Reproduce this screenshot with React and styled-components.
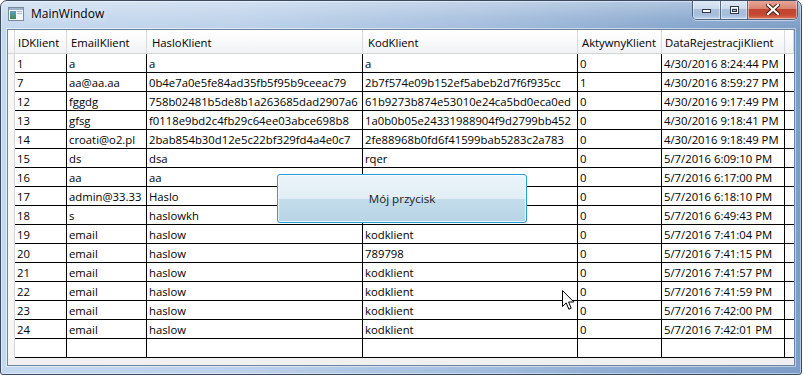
import React from 'react';
import styled, { createGlobalStyle } from 'styled-components';

const GlobalStyle = createGlobalStyle`
  html, body {
    margin: 0;
    padding: 0;
    background: #ffffff;
  }
  body {
    font-family: "Open Sans", "Noto Sans", sans-serif;
    font-size: 11.3px;
    color: #000;
  }
`;

const columns = [
  { key: 'id', title: 'IDKlient', width: 52 },
  { key: 'email', title: 'EmailKlient', width: 80 },
  { key: 'haslo', title: 'HasloKlient', width: 216 },
  { key: 'kod', title: 'KodKlient', width: 215 },
  { key: 'aktywny', title: 'AktywnyKlient', width: 84 },
  { key: 'data', title: 'DataRejestracjiKlient', width: 123 },
];

// KodKlient of rows 16-18 sits under the button, so it is left blank
const rows = [
  ['1', 'a', 'a', 'a', '0', '4/30/2016 8:24:44 PM'],
  ['7', 'aa@aa.aa', '0b4e7a0e5fe84ad35fb5f95b9ceeac79', '2b7f574e09b152ef5abeb2d7f6f935cc', '1', '4/30/2016 8:59:27 PM'],
  ['12', 'fggdg', '758b02481b5de8b1a263685dad2907a6', '61b9273b874e53010e24ca5bd0eca0ed', '0', '4/30/2016 9:17:49 PM'],
  ['13', 'gfsg', 'f0118e9bd2c4fb29c64ee03abce698b8', '1a0b0b05e24331988904f9d2799bb452', '0', '4/30/2016 9:18:41 PM'],
  ['14', 'croati@o2.pl', '2bab854b30d12e5c22bf329fd4a4e0c7', '2fe88968b0fd6f41599bab5283c2a783', '0', '4/30/2016 9:18:49 PM'],
  ['15', 'ds', 'dsa', 'rqer', '0', '5/7/2016 6:09:10 PM'],
  ['16', 'aa', 'aa', '', '0', '5/7/2016 6:17:00 PM'],
  ['17', 'admin@33.33', 'Haslo', '', '0', '5/7/2016 6:18:10 PM'],
  ['18', 's', 'haslowkh', '', '0', '5/7/2016 6:49:43 PM'],
  ['19', 'email', 'haslow', 'kodklient', '0', '5/7/2016 7:41:04 PM'],
  ['20', 'email', 'haslow', '789798', '0', '5/7/2016 7:41:15 PM'],
  ['21', 'email', 'haslow', 'kodklient', '0', '5/7/2016 7:41:57 PM'],
  ['22', 'email', 'haslow', 'kodklient', '0', '5/7/2016 7:41:59 PM'],
  ['23', 'email', 'haslow', 'kodklient', '0', '5/7/2016 7:42:00 PM'],
  ['24', 'email', 'haslow', 'kodklient', '0', '5/7/2016 7:42:01 PM'],
];

const gridTemplate = `7px ${columns.map((c) => c.width + 'px').join(' ')} 1fr`;

const Screen = styled.div`
  position: relative;
  width: 804px;
  height: 376px;
  overflow: hidden;
`;

const Window = styled.div`
  width: 802px;
  height: 375px;
  box-sizing: border-box;
  border: 1px solid #3a4a60;
  border-radius: 7px 7px 3px 3px;
  background: linear-gradient(90deg, #c4d8ee 0%, #bcd1ea 30%, #a3bddd 60%, #86a6cd 85%, #7c9dc6 100%);
  display: flex;
  flex-direction: column;
  overflow: hidden;
  box-shadow: inset 0 0 0 1px rgba(255, 255, 255, 0.45);
`;

const TitleBar = styled.div`
  height: 28px;
  display: flex;
  align-items: flex-start;
  background: linear-gradient(180deg, rgba(255, 255, 255, 0.35) 0%, rgba(255, 255, 255, 0.1) 60%, rgba(255, 255, 255, 0) 100%);
`;

const AppIcon = styled.svg`
  margin: 6px 0 0 7px;
  flex: none;
`;

const Title = styled.div`
  margin: 5px 0 0 7px;
  font-size: 12px;
  line-height: 16px;
  color: #000;
  text-shadow: 0 0 6px rgba(255, 255, 255, 0.9);
`;

const CaptionButtons = styled.div`
  margin-left: auto;
  margin-right: 3px;
  margin-top: -1px;
  display: flex;
  height: 19px;
  border: 1px solid #4d6384;
  border-top: none;
  border-radius: 0 0 5px 5px;
  overflow: hidden;
  box-shadow: 0 1px 0 rgba(255, 255, 255, 0.5);
`;

const CaptionButton = styled.div`
  width: ${(p) => p.$w}px;
  display: flex;
  align-items: center;
  justify-content: center;
  box-sizing: border-box;
  border-left: ${(p) => (p.$first ? 'none' : '1px solid #536a8a')};
  background: ${(p) =>
    p.$close
      ? 'linear-gradient(180deg, #e9a99b 0%, #d98572 45%, #c2452e 50%, #c54a33 80%, #e07a5e 100%)'
      : 'linear-gradient(180deg, #e2ebf6 0%, #ccdaeb 45%, #a9bfdb 50%, #a6bddb 80%, #c3d6ee 100%)'};
  box-shadow: inset 0 0 0 1px rgba(255, 255, 255, 0.45);
`;

const Client = styled.div`
  position: relative;
  flex: 1;
  margin: 0 6px 8px 6px;
  border: 1px solid #6c83a2;
  background: #f0f0f0;
  box-shadow: 0 0 0 1px rgba(255, 255, 255, 0.5);
`;

const Grid = styled.div`
  display: grid;
  grid-template-columns: ${gridTemplate};
  grid-auto-rows: 19px;
  grid-template-rows: 24px;
`;

const HeaderCell = styled.div`
  box-sizing: border-box;
  display: flex;
  align-items: center;
  padding: 1px 3px 0 ${(p) => p.$pad}px;
  white-space: nowrap;
  overflow: hidden;
  background: linear-gradient(180deg, #ffffff 0%, #fbfbfc 40%, #f1f2f4 100%);
  border-bottom: 1px solid #d5d5d5;
  border-right: 1px solid #dadada;
`;

const RowHeader = styled.div`
  background: #f7f7f7;
  border-right: 1px solid #d5d5d5;
`;

const Cell = styled.div`
  box-sizing: border-box;
  display: flex;
  align-items: center;
  padding: 0 2px;
  white-space: nowrap;
  overflow: hidden;
  background: #ffffff;
  border-bottom: 1px solid #000;
  border-right: ${(p) => (p.$last ? 'none' : '1px solid #000')};
`;

const PushButton = styled.button`
  position: absolute;
  left: 269px;
  top: 144px;
  width: 250px;
  height: 49px;
  box-sizing: border-box;
  border: 1px solid #2a9ad8;
  border-radius: 3px;
  background: linear-gradient(180deg, #eaf3f9 0%, #e2eef6 50%, #c3dcea 51%, #b7d4e6 100%);
  box-shadow: inset 0 0 0 1px rgba(255, 255, 255, 0.7);
  font-family: "Open Sans", "Noto Sans", sans-serif;
  font-size: 11.6px;
  color: #1a1a1a;
  padding: 0;
`;

const Cursor = styled.svg`
  position: absolute;
  left: 562px;
  top: 290px;
`;

const headerPads = [3, 4, 5, 5, 4, 3];

function WindowIcon() {
  return (
    <AppIcon width="16" height="14" viewBox="0 0 16 14">
      <defs>
        <linearGradient id="ico" x1="0" y1="0" x2="0" y2="1">
          <stop offset="0" stopColor="#5fa0c8" />
          <stop offset="1" stopColor="#3c8a5a" />
        </linearGradient>
      </defs>
      <rect x="0.5" y="0.5" width="15" height="13" fill="#f4f6f8" stroke="#7a8a99" />
      <rect x="1" y="1" width="14" height="2" fill="#9fb4cc" />
      <rect x="2" y="4" width="6" height="8" fill="url(#ico)" />
      <rect x="9" y="4" width="5" height="1" fill="#b0bcc8" />
      <rect x="9" y="6" width="5" height="1" fill="#b0bcc8" />
    </AppIcon>
  );
}

export default function App() {
  return (
    <Screen>
      <GlobalStyle />
      <Window>
        <TitleBar>
          <WindowIcon />
          <Title>MainWindow</Title>
          <CaptionButtons>
            <CaptionButton $w={27} $first>
              <svg width="11" height="9" viewBox="0 0 11 9">
                <rect x="1.5" y="4.5" width="8" height="3" fill="#fff" stroke="#2c3a4c" />
              </svg>
            </CaptionButton>
            <CaptionButton $w={27}>
              <svg width="11" height="10" viewBox="0 0 11 10">
                <rect x="1.5" y="1.5" width="8" height="7" fill="none" stroke="#2c3a4c" />
                <rect x="2.5" y="2.5" width="6" height="5" fill="none" stroke="#fff" />
                <rect x="3.5" y="4.5" width="4" height="2" fill="none" stroke="#2c3a4c" />
              </svg>
            </CaptionButton>
            <CaptionButton $w={50} $close>
              <svg width="14" height="11" viewBox="0 0 14 11">
                <path d="M2 1 L12 10 M12 1 L2 10" stroke="#3b1a14" strokeWidth="4" strokeLinecap="square" />
                <path d="M2 1 L12 10 M12 1 L2 10" stroke="#fff" strokeWidth="2.2" strokeLinecap="square" />
              </svg>
            </CaptionButton>
          </CaptionButtons>
        </TitleBar>
        <Client>
          <Grid>
            <HeaderCell $pad={0} />
            {columns.map((c, i) => (
              <HeaderCell key={c.key} $pad={headerPads[i]}>
                {c.title}
              </HeaderCell>
            ))}
            <HeaderCell $pad={0} />
            {rows.map((r) => (
              <React.Fragment key={r[0]}>
                <RowHeader />
                {r.map((v, i) => (
                  <Cell key={i}>{v}</Cell>
                ))}
                <Cell $last />
              </React.Fragment>
            ))}
            <RowHeader />
            {columns.map((c) => (
              <Cell key={c.key} />
            ))}
            <Cell $last />
          </Grid>
          <PushButton>Mój przycisk</PushButton>
        </Client>
      </Window>
      <Cursor width="13" height="21" viewBox="0 0 13 21">
        <path d="M0.5 0.5 L0.5 16.5 L4.2 12.9 L6.8 19.2 L9.2 18.2 L6.6 12 L11.8 12 Z" fill="#fff" stroke="#000" strokeWidth="1" strokeLinejoin="round" />
      </Cursor>
    </Screen>
  );
}
